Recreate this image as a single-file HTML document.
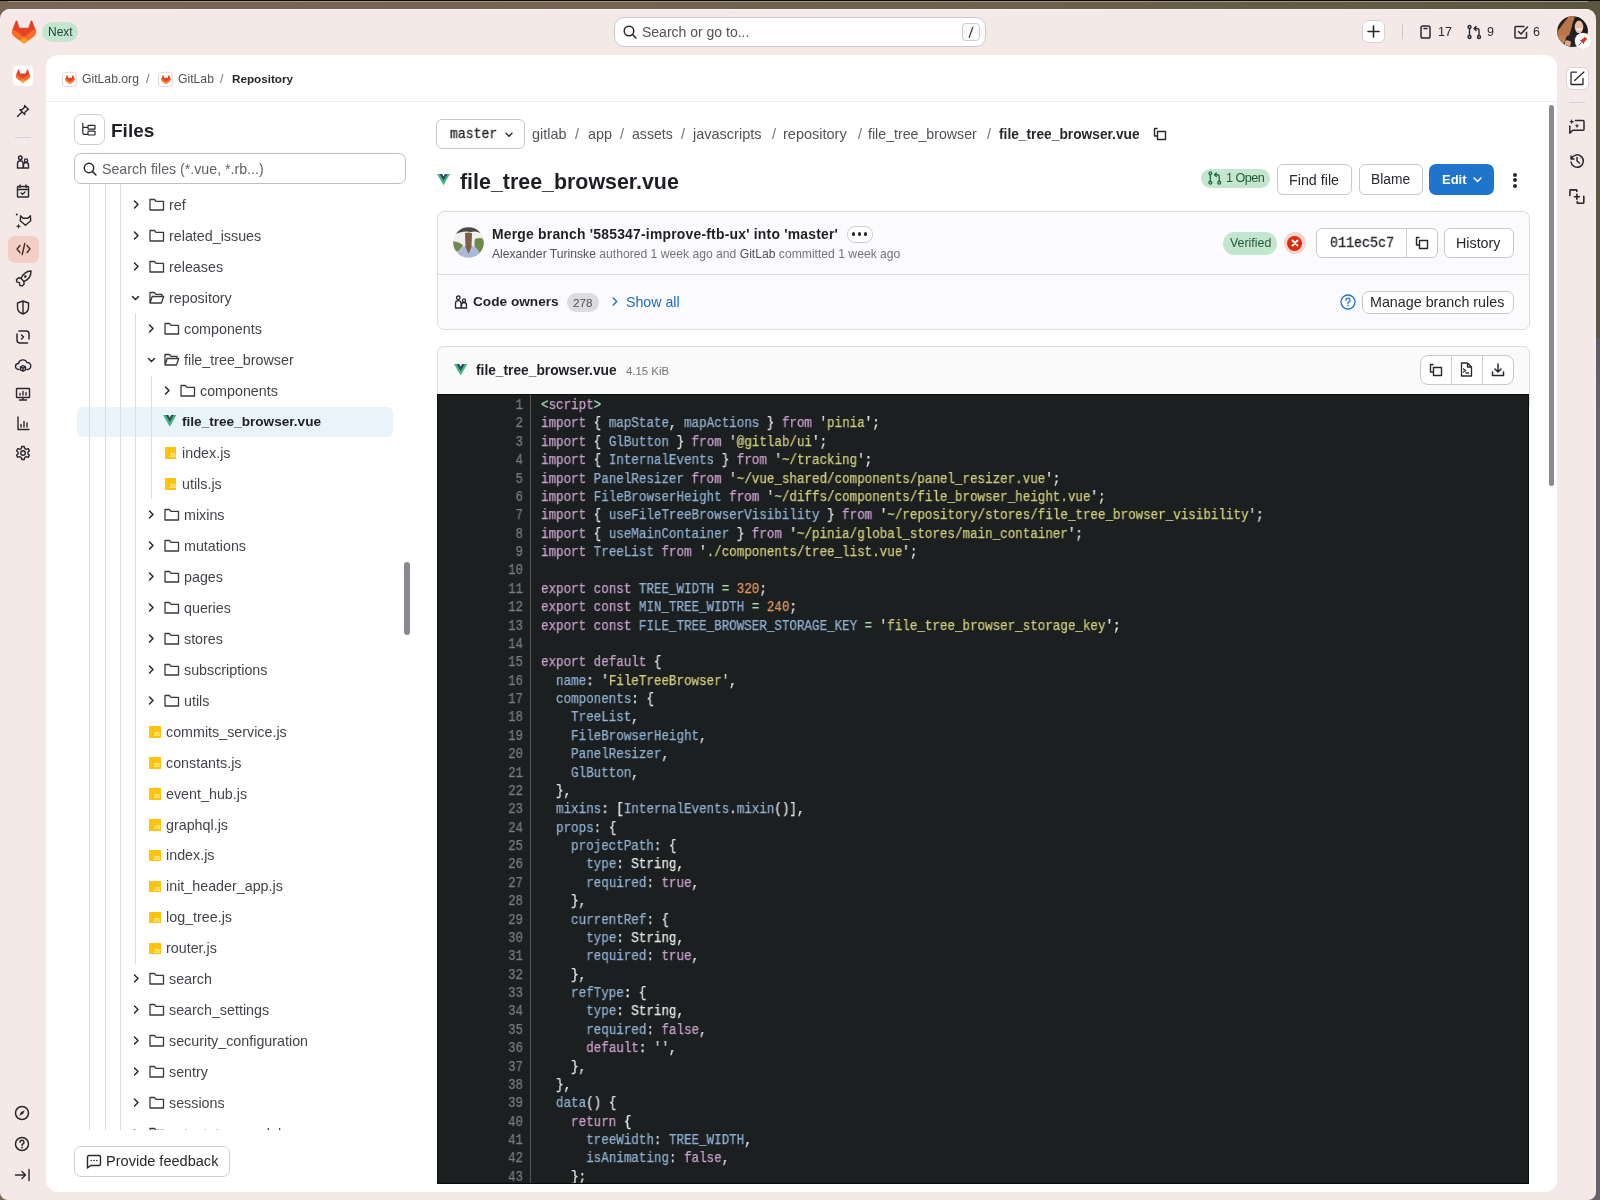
<!DOCTYPE html>
<html><head><meta charset="utf-8">
<style>
*{box-sizing:border-box;margin:0;padding:0}
html,body{width:1600px;height:1200px;overflow:hidden}
body{position:relative;background:linear-gradient(90deg,#7a6654 0%,#6e624c 60%,#5b5641 100%);font-family:"Liberation Sans",sans-serif;color:#28272d}
#topline{position:absolute;left:0;top:0;width:1600px;height:1px;background:#0a0a0a}
#win{position:absolute;left:0;top:8.6px;width:1596px;height:1191.4px;background:#f4e9e7;border-radius:10px 10px 8px 8px;box-shadow:inset 0 1px 0 #fbf5f3}
#panel{position:absolute;left:46px;top:55px;width:1511px;height:1137px;background:#fff;border-radius:12px}
svg{display:block;overflow:visible}
.ic{position:absolute}
.t{position:absolute;white-space:nowrap;line-height:1;will-change:transform}
.s{fill:none;stroke:#28272d;stroke-width:1.4;stroke-linecap:round;stroke-linejoin:round}
.btn{position:absolute;border:1px solid #c9c7cc;border-radius:6px;background:#fff}
.tree .r{position:absolute;height:31px;font-size:14.2px;color:#3a383f;white-space:nowrap;line-height:31px}
.code{position:absolute;left:436.5px;top:393.5px;width:1092.5px;height:790px;background:#1c1f20;border:1px solid #0c0c0c;overflow:hidden}
.ln{position:absolute;left:0;top:1.8px;width:95px;text-align:right;font-family:"Liberation Mono",monospace;font-size:14px;line-height:18.37px;color:#7d7b80;white-space:pre;transform:scaleX(.8958);transform-origin:0 0;-webkit-text-stroke:.25px #7d7b80;will-change:transform}
.gut{position:absolute;left:92.5px;top:0;width:1px;height:800px;background:#55555a}
.cd{position:absolute;left:103.5px;top:1.8px;font-family:"Liberation Mono",monospace;font-size:14px;line-height:18.37px;color:#e0e0e0;white-space:pre;transform:scaleX(.8958);transform-origin:0 0;-webkit-text-stroke:.25px currentColor;will-change:transform}
.k{color:#c9a0cc}.v{color:#8fb0d2}.st{color:#d0cd7c}.n{color:#e4965f}.o{color:#a8d8b0}.p{color:#e6e6e6}
</style></head><body>
<div id="topline"></div>
<div style="position:absolute;left:8px;top:1px;width:1580px;height:1px;background:#a59685"></div>
<div style="position:absolute;left:1590px;top:338px;width:10px;height:862px;background:linear-gradient(180deg,#5f5b66 0%,#6a646c 10%,#67616a 100%)"></div>
<div id="win"></div>
<div id="panel"></div>
<div id="hl" style="position:absolute;left:1595px;top:20px;width:1px;height:1172px;background:#fbf3f1"></div>
<!-- TOP BAR -->
<svg class="ic" style="left:12px;top:20px" width="24" height="24" viewBox="0 0 25 24"><path fill="#E24329" d="m24.507 9.5-.034-.09L21.082.562a.896.896 0 0 0-1.694.091l-2.29 7.01H7.825L5.535.653a.898.898 0 0 0-1.694-.09L.451 9.411.416 9.5a6.297 6.297 0 0 0 2.09 7.278l.012.01.03.022 5.16 3.867 2.56 1.935 1.554 1.176a1.051 1.051 0 0 0 1.268 0l1.555-1.176 2.56-1.935 5.197-3.89.014-.01A6.297 6.297 0 0 0 24.507 9.5Z"/><path fill="#FC6D26" d="m24.507 9.5-.034-.09a11.44 11.44 0 0 0-4.56 2.051l-7.447 5.632 4.742 3.584 5.197-3.89.014-.01A6.297 6.297 0 0 0 24.507 9.5Z"/><path fill="#FCA326" d="m7.707 20.677 2.56 1.935 1.555 1.176a1.051 1.051 0 0 0 1.268 0l1.555-1.176 2.56-1.935-4.743-3.584-4.755 3.584Z"/><path fill="#FC6D26" d="M5.01 11.461a11.43 11.43 0 0 0-4.56-2.05L.416 9.5a6.297 6.297 0 0 0 2.09 7.278l.012.01.03.022 5.16 3.867 4.745-3.584-7.444-5.632Z"/></svg>
<div class="abs" style="position:absolute;left:42px;top:22px;width:36px;height:20px;border-radius:10px;background:#c4e6cf"></div>
<div class="t" style="left:48px;top:26px;font-size:12px;color:#1f3d3a">Next</div>

<div class="abs" style="position:absolute;left:613.7px;top:16.5px;width:372.8px;height:30.5px;border:1px solid #cdcacf;border-radius:10px;background:#fff"></div>
<svg class="ic" style="left:623px;top:25px" width="14" height="14" viewBox="0 0 14 14"><circle class="s" cx="6" cy="6" r="4.8" style="stroke-width:1.5"/><path class="s" d="M9.5 9.5 13 13" style="stroke-width:1.5"/></svg>
<div class="t" style="left:642px;top:25px;font-size:14px;color:#535158">Search or go to...</div>
<div class="abs" style="position:absolute;left:961.5px;top:23.3px;width:18.3px;height:17.3px;border:1px solid #cdcacf;border-radius:4px;background:#fbfbfc"></div>
<svg class="ic" style="left:967px;top:26px" width="8" height="13" viewBox="0 0 8 13"><path d="M2.2 11.3 5.8 1.3" stroke="#3a383f" stroke-width="1.2" stroke-linecap="round"/></svg>

<div class="abs" style="position:absolute;left:1362px;top:20px;width:23px;height:23px;border:1px solid #d6d2d4;border-radius:6px;background:#fff"></div>
<svg class="ic" style="left:1367px;top:25px" width="13" height="13" viewBox="0 0 13 13"><path class="s" d="M6.5 1v11M1 6.5h11" style="stroke-width:1.6"/></svg>
<div class="abs" style="position:absolute;left:1402px;top:24px;width:1px;height:15px;background:#cdc6c6"></div>
<svg class="ic" style="left:1420px;top:25px" width="11" height="14" viewBox="0 0 11 14"><rect class="s" x="1" y="1" width="9" height="12" rx="1.8" style="stroke-width:1.5"/><path class="s" d="M4 3.5h3" style="stroke-width:1.5"/></svg>
<div class="t" style="left:1438px;top:26px;font-size:12.5px;color:#28272d">17</div>
<svg class="ic" style="left:1467px;top:25px" width="15" height="14" viewBox="0 0 15 14"><circle class="s" cx="2.5" cy="2" r="1.5" style="stroke-width:1.4"/><circle class="s" cx="2.5" cy="12" r="1.5" style="stroke-width:1.4"/><circle class="s" cx="12" cy="12" r="1.5" style="stroke-width:1.4"/><path class="s" d="M2.5 3.5v7M12 10.5V5.5q0-2-2-2H7.5M9 1.5l-2 2 2 2" style="stroke-width:1.4"/></svg>
<div class="t" style="left:1487px;top:26px;font-size:12.5px;color:#28272d">9</div>
<svg class="ic" style="left:1514px;top:25px" width="15" height="14" viewBox="0 0 15 14"><path class="s" d="M12.5 7.5V12a1 1 0 0 1-1 1H2a1 1 0 0 1-1-1V2.5a1 1 0 0 1 1-1h8" style="stroke-width:1.5"/><path class="s" d="M4.5 6.5 7 9l6.5-7" style="stroke-width:1.5"/></svg>
<div class="t" style="left:1533px;top:26px;font-size:12.5px;color:#28272d">6</div>

<svg class="ic" style="left:1557px;top:16px" width="31" height="31" viewBox="0 0 31 31">
<defs><clipPath id="av"><circle cx="15.5" cy="15.5" r="15.3"/></clipPath></defs>
<g clip-path="url(#av)">
<rect width="31" height="31" fill="#2a2320"/>
<path d="M12 0 L18 0 L12 20 L0 24 L0 16 Z" fill="#b8754a"/>
<path d="M0 20 L10 19 L6 31 L0 31Z" fill="#c0804f"/>
<ellipse cx="23" cy="12" rx="8" ry="12" fill="#1e1a1c"/>
<ellipse cx="22" cy="11" rx="4.3" ry="6.5" fill="#e8c0a8"/>
<path d="M19.5 12.5 Q22 15 24.5 12.5" stroke="#fff" stroke-width="1.2" fill="none"/>
<path d="M10 20 L22 17 L26 31 L8 31Z" fill="#25232a"/>
<path d="M8 25 Q11 23 14 26 L13 31 L8 31Z" fill="#d9a98a"/>
</g></svg>
<div class="abs" style="position:absolute;left:1575px;top:33px;width:15.5px;height:15.5px;border-radius:50%;background:#fff;box-shadow:0 0 1px #bbb"></div>
<svg class="ic" style="left:1577px;top:35px" width="12" height="12" viewBox="0 0 12 12"><path d="M1.5 10.5 5 7" stroke="#8a8a8a" stroke-width="1"/><path d="M7.5 1.5 10.5 4.5 9.2 5 7 7.6 7.3 9.4 2.6 4.7 4.4 5 7 2.8z" fill="#e0301e"/></svg>

<!-- LEFT SIDEBAR -->
<div class="abs" style="position:absolute;left:13px;top:66px;width:20px;height:20px;background:#fff;border-radius:4px"></div>
<svg class="ic" style="left:16px;top:69px" width="14" height="14" viewBox="0 0 25 24"><path fill="#E24329" d="m24.507 9.5-.034-.09L21.082.562a.896.896 0 0 0-1.694.091l-2.29 7.01H7.825L5.535.653a.898.898 0 0 0-1.694-.09L.451 9.411.416 9.5a6.297 6.297 0 0 0 2.09 7.278l.012.01.03.022 5.16 3.867 2.56 1.935 1.554 1.176a1.051 1.051 0 0 0 1.268 0l1.555-1.176 2.56-1.935 5.197-3.89.014-.01A6.297 6.297 0 0 0 24.507 9.5Z"/><path fill="#FC6D26" d="m24.507 9.5-.034-.09a11.44 11.44 0 0 0-4.56 2.051l-7.447 5.632 4.742 3.584 5.197-3.89.014-.01A6.297 6.297 0 0 0 24.507 9.5Z"/><path fill="#FCA326" d="m7.707 20.677 2.56 1.935 1.555 1.176a1.051 1.051 0 0 0 1.268 0l1.555-1.176 2.56-1.935-4.743-3.584-4.755 3.584Z"/><path fill="#FC6D26" d="M5.01 11.461a11.43 11.43 0 0 0-4.56-2.05L.416 9.5a6.297 6.297 0 0 0 2.09 7.278l.012.01.03.022 5.16 3.867 4.745-3.584-7.444-5.632Z"/></svg>
<svg class="ic" style="left:16px;top:104px" width="14" height="14" viewBox="0 0 14 14"><path class="s" d="M8.5 1.5l4 4-1.2.4-2.3 2.3-.3 2.3-4.7-4.7 2.3-.3 2.3-2.3zM5.5 8.5 1.5 12.5"/></svg>
<div class="abs" style="position:absolute;left:15px;top:136.5px;width:16px;height:1.2px;background:#d3d2d8"></div>
<svg class="ic" style="left:16px;top:155px" width="14" height="14" viewBox="0 0 14 14"><circle class="s" cx="4.3" cy="2.8" r="1.8"/><path class="s" d="M1.5 13V8.5a2.8 2.8 0 0 1 5.6 0V13zM7.5 13v-3a2.5 2.5 0 0 1 5 0v3z"/><circle class="s" cx="10" cy="5.5" r="1.6"/></svg>
<svg class="ic" style="left:16px;top:184px" width="14" height="14" viewBox="0 0 14 14"><rect class="s" x="1.5" y="2.5" width="11" height="10.5" rx=".5"/><path class="s" d="M1.5 5.5h11M4 1v2.5M10 1v2.5M5 9l1.5 1.3L9 8"/></svg>
<svg class="ic" style="left:15px;top:212px" width="18" height="18" viewBox="0 0 18 18"><path class="s" d="M5.6 3.8 8 6.2h5L15.4 3.8l.3 5L10.5 13.2 5.3 8.8z" style="stroke-width:1.4"/><circle cx="1.8" cy="2.6" r="1" fill="#28272d"/><path d="M3.5 11.6l.7 1.9 1.9.8-1.9.8-.7 1.9-.7-1.9-1.9-.8 1.9-.8z" fill="#28272d"/></svg>
<div class="abs" style="position:absolute;left:8px;top:236px;width:31px;height:27px;border-radius:7px;background:#f4cec5"></div>
<svg class="ic" style="left:16px;top:242px" width="15" height="14" viewBox="0 0 15 14"><path class="s" d="M4 3.5 1 7l3 3.5M11 3.5 14 7l-3 3.5M8.8 1.5 6.2 12.5" style="stroke:#4a2a22"/></svg>
<svg class="ic" style="left:15px;top:270px" width="17" height="17" viewBox="0 0 17 17"><path class="s" d="M16 1c-4.5.2-8 2.8-10 7.5l3 3C13.7 9.5 16.2 6 16 1z" style="stroke-width:1.4"/><circle cx="10.3" cy="6.6" r="1.3" fill="#28272d"/><path class="s" d="M6 8.3 3.4 7.8 1.4 9.8l.6 2.3 2.3.3M8.7 11.4l.5 2.6-2 1.9-2.3-.4-.4-2.2" style="stroke-width:1.4"/></svg>
<svg class="ic" style="left:16px;top:300px" width="14" height="15" viewBox="0 0 14 15"><path class="s" d="M7 1 1.5 3v4.5c0 3 2.5 5.5 5.5 6.5 3-1 5.5-3.5 5.5-6.5V3zM7 1v13"/></svg>
<svg class="ic" style="left:16px;top:329px" width="15" height="15" viewBox="0 0 15 15"><path class="s" d="M3 2h7a3 3 0 0 1 3 3v5M1 5v6a3 3 0 0 0 3 3h7.5M5.5 6l2 2-2 2" style="stroke-width:1.5"/></svg>
<svg class="ic" style="left:15px;top:358px" width="16" height="15" viewBox="0 0 16 15"><path class="s" d="M4 11.5H3.5a3 3 0 0 1 0-6A4.5 4.5 0 0 1 12 4.5a3.5 3.5 0 0 1 .5 7H12"/><path class="s" d="M8 7.5l2.5 1.3v3L8 13.2 5.5 11.8v-3zM5.5 8.8 8 10.1l2.5-1.3M8 10.1v3"/></svg>
<svg class="ic" style="left:15px;top:387px" width="16" height="14" viewBox="0 0 16 14"><rect class="s" x="1.5" y="1.5" width="13" height="9" rx=".5"/><path class="s" d="M4.5 13h7M8 10.5V13M5 8V6.5M8 8V4.5M11 8V5.5"/></svg>
<svg class="ic" style="left:16px;top:416px" width="14" height="14" viewBox="0 0 14 14"><path class="s" d="M2 1v12.5h11M5 11V8.5M8 11V5.5M11 11V7"/></svg>
<svg class="ic" style="left:15px;top:445px" width="16" height="16" viewBox="0 0 16 16"><circle class="s" cx="8" cy="8" r="2.3"/><path class="s" d="M6.8 1.5h2.4l.5 2 1.5.8 2-.6 1.2 2.1-1.5 1.4v1.6l1.5 1.4-1.2 2.1-2-.6-1.5.8-.5 2H6.8l-.5-2-1.5-.8-2 .6-1.2-2.1 1.5-1.4V7.2L1.6 5.8l1.2-2.1 2 .6 1.5-.8z"/></svg>
<svg class="ic" style="left:14px;top:1105px" width="16" height="16" viewBox="0 0 16 16"><circle class="s" cx="8" cy="8" r="6.5" style="stroke-width:1.5"/><path d="M10.8 5.2 9 9 5.2 10.8 7 7z" fill="#28272d"/></svg>
<svg class="ic" style="left:14px;top:1135.8px" width="16" height="16" viewBox="0 0 16 16"><circle class="s" cx="8" cy="8" r="6.5" style="stroke-width:1.5"/><path class="s" d="M6 6.2a2 2 0 1 1 2.8 1.8c-.6.3-.8.7-.8 1.3v.3" style="stroke-width:1.5"/><circle cx="8" cy="11.6" r=".9" fill="#28272d"/></svg>
<svg class="ic" style="left:13.5px;top:1168px" width="17" height="14" viewBox="0 0 17 14"><path class="s" d="M1.5 7h10M8 3.5 11.5 7 8 10.5M15 1.5v11" style="stroke-width:1.4"/></svg>

<!-- RIGHT SIDEBAR -->
<div class="abs" style="position:absolute;left:1566px;top:67px;width:23px;height:23px;border:1px solid #d6d2d4;border-radius:6px;background:#fff"></div>
<svg class="ic" style="left:1570px;top:71px" width="15" height="15" viewBox="0 0 15 15"><path class="s" d="M6.3 1.2H1.6a.6.6 0 0 0-.6.6v11.1a.6.6 0 0 0 .6.6h10.8a.6.6 0 0 0 .6-.6V7.3M4.6 9.4 13.9.9" style="stroke-width:1.3"/></svg>
<div class="abs" style="position:absolute;left:1569px;top:101.7px;width:16px;height:1.2px;background:#d3d2d8"></div>
<svg class="ic" style="left:1569px;top:119px" width="16" height="16" viewBox="0 0 16 16"><path class="s" d="M.8 7v7.3l3-3H14a1 1 0 0 0 1-1V2.5a1 1 0 0 0-1-1H6.5" style="stroke-width:1.5"/><path d="M2.7 0.10000000000000009L3.4280000000000004 1.972L5.300000000000001 2.7L3.4280000000000004 3.4280000000000004L2.7 5.300000000000001L1.972 3.4280000000000004L0.10000000000000009 2.7L1.972 1.972Z M8 4.4L8.672 6.128L10.4 6.8L8.672 7.4719999999999995L8 9.2L7.328 7.4719999999999995L5.6 6.8L7.328 6.128Z" fill="#28272d"/></svg>
<svg class="ic" style="left:1569px;top:153px" width="16" height="16" viewBox="0 0 16 16"><path class="s" d="M2 3v3h3M2.3 6A6.2 6.2 0 1 1 2 9M8 4.5V8l2.5 2" style="stroke-width:1.5"/></svg>
<svg class="ic" style="left:1569px;top:189px" width="16" height="16" viewBox="0 0 16 16"><path class="s" d="M.9 6.5V1.5a.6.6 0 0 1 .6-.6h6.3v1.6M14.8 7.3v6.3a.6.6 0 0 1-.6.6H8.3v-1.6M7.9 5.2v5M5.4 7.7h5" style="stroke-width:1.6"/></svg>
<!-- BREADCRUMB -->
<div class="abs" style="position:absolute;left:46px;top:101px;width:1511px;height:1px;background:#f3ebe9"></div>
<div class="abs" style="position:absolute;left:62px;top:72px;width:15px;height:15px;border:1px solid #dcdcde;border-radius:4px;background:#fff"></div>
<svg class="ic" style="left:65px;top:75px" width="10" height="9" viewBox="0 0 25 24"><path fill="#E24329" d="m24.507 9.5-.034-.09L21.082.562a.896.896 0 0 0-1.694.091l-2.29 7.01H7.825L5.535.653a.898.898 0 0 0-1.694-.09L.451 9.411.416 9.5a6.297 6.297 0 0 0 2.09 7.278l.012.01.03.022 5.16 3.867 2.56 1.935 1.554 1.176a1.051 1.051 0 0 0 1.268 0l1.555-1.176 2.56-1.935 5.197-3.89.014-.01A6.297 6.297 0 0 0 24.507 9.5Z"/><path fill="#FC6D26" d="m24.507 9.5-.034-.09a11.44 11.44 0 0 0-4.56 2.051l-7.447 5.632 4.742 3.584 5.197-3.89.014-.01A6.297 6.297 0 0 0 24.507 9.5Z"/><path fill="#FCA326" d="m7.707 20.677 2.56 1.935 1.555 1.176a1.051 1.051 0 0 0 1.268 0l1.555-1.176 2.56-1.935-4.743-3.584-4.755 3.584Z"/><path fill="#FC6D26" d="M5.01 11.461a11.43 11.43 0 0 0-4.56-2.05L.416 9.5a6.297 6.297 0 0 0 2.09 7.278l.012.01.03.022 5.16 3.867 4.745-3.584-7.444-5.632Z"/></svg>
<div class="t" style="left:81.5px;top:73px;font-size:12.2px;color:#535158">GitLab.org</div>
<div class="t" style="left:146px;top:73px;font-size:12.5px;color:#737278">/</div>
<div class="abs" style="position:absolute;left:158px;top:72px;width:15px;height:15px;border:1px solid #dcdcde;border-radius:4px;background:#fff"></div>
<svg class="ic" style="left:161px;top:75px" width="10" height="9" viewBox="0 0 25 24"><path fill="#E24329" d="m24.507 9.5-.034-.09L21.082.562a.896.896 0 0 0-1.694.091l-2.29 7.01H7.825L5.535.653a.898.898 0 0 0-1.694-.09L.451 9.411.416 9.5a6.297 6.297 0 0 0 2.09 7.278l.012.01.03.022 5.16 3.867 2.56 1.935 1.554 1.176a1.051 1.051 0 0 0 1.268 0l1.555-1.176 2.56-1.935 5.197-3.89.014-.01A6.297 6.297 0 0 0 24.507 9.5Z"/><path fill="#FC6D26" d="m24.507 9.5-.034-.09a11.44 11.44 0 0 0-4.56 2.051l-7.447 5.632 4.742 3.584 5.197-3.89.014-.01A6.297 6.297 0 0 0 24.507 9.5Z"/><path fill="#FCA326" d="m7.707 20.677 2.56 1.935 1.555 1.176a1.051 1.051 0 0 0 1.268 0l1.555-1.176 2.56-1.935-4.743-3.584-4.755 3.584Z"/><path fill="#FC6D26" d="M5.01 11.461a11.43 11.43 0 0 0-4.56-2.05L.416 9.5a6.297 6.297 0 0 0 2.09 7.278l.012.01.03.022 5.16 3.867 4.745-3.584-7.444-5.632Z"/></svg>
<div class="t" style="left:177.5px;top:73px;font-size:12.2px;color:#535158">GitLab</div>
<div class="t" style="left:219.5px;top:73px;font-size:12.5px;color:#737278">/</div>
<div class="t" style="left:232px;top:73px;font-size:11.7px;font-weight:bold;color:#28272d">Repository</div>

<!-- FILES HEADER -->
<div class="abs" style="position:absolute;left:73.5px;top:114px;width:31px;height:31px;border:1px solid #cfcdd2;border-radius:7px;background:#fff"></div>
<svg class="ic" style="left:82px;top:123px" width="14" height="14" viewBox="0 0 14 14"><path class="s" d="M.8.3v9.4q0 1.6 1.6 1.6h3.1M.8 4.3h4.7" style="stroke-width:1.2"/><rect class="s" x="6" y="2.3" width="7" height="3.8" rx=".4" style="stroke-width:1.2"/><rect class="s" x="6" y="8.2" width="7" height="3.8" rx=".4" style="stroke-width:1.2"/></svg>
<div class="t" style="left:110.5px;top:121px;font-size:19px;font-weight:bold;color:#1f1e24">Files</div>
<div class="abs" style="position:absolute;left:73.5px;top:153px;width:332px;height:31px;border:1px solid #bfbfc3;border-radius:7px;background:#fff"></div>
<svg class="ic" style="left:83px;top:162px" width="14" height="14" viewBox="0 0 14 14"><circle class="s" cx="6" cy="6" r="4.7" style="stroke-width:1.5"/><path class="s" d="M9.4 9.4 13 13" style="stroke-width:1.5"/></svg>
<div class="t" style="left:102px;top:161.5px;font-size:14.2px;color:#626168">Search files (*.vue, *.rb...)</div>
<div class="abs" style="position:absolute;left:404px;top:562px;width:6px;height:73px;border-radius:3px;background:#8b8a90"></div>

<!-- FEEDBACK -->
<div class="abs" style="position:absolute;left:74px;top:1146px;width:156px;height:31px;border:1px solid #cfcdd2;border-radius:7px;background:#fff"></div>
<svg class="ic" style="left:86px;top:1154px" width="16" height="15" viewBox="0 0 16 15"><path class="s" d="M1.5 14V3a1.5 1.5 0 0 1 1.5-1.5h10A1.5 1.5 0 0 1 14.5 3v7A1.5 1.5 0 0 1 13 11.5H4.5z" style="stroke-width:1.4"/><circle cx="5.2" cy="6.5" r=".8" fill="#28272d"/><circle cx="8" cy="6.5" r=".8" fill="#28272d"/><circle cx="10.8" cy="6.5" r=".8" fill="#28272d"/></svg>
<div class="t" style="left:106px;top:1154px;font-size:14.55px;color:#28272d">Provide feedback</div>
<div style="position:absolute;left:0;top:0;width:430px;height:1129.5px;overflow:hidden">
<div class="abs" style="position:absolute;left:77px;top:407px;width:316px;height:30px;border-radius:6px;background:#e9f3fc"></div>
<div class="abs" style="position:absolute;left:89px;top:184px;width:1px;height:946px;background:#dcdcde"></div>
<div class="abs" style="position:absolute;left:105px;top:184px;width:1px;height:946px;background:#dcdcde"></div>
<div class="abs" style="position:absolute;left:120px;top:184px;width:1px;height:946px;background:#dcdcde"></div>
<div class="abs" style="position:absolute;left:135px;top:313px;width:1px;height:651px;background:#dcdcde"></div>
<div class="abs" style="position:absolute;left:151px;top:376px;width:1px;height:123px;background:#dcdcde"></div>
<svg class="ic" style="left:132.5px;top:200.1px" width="6" height="9" viewBox="0 0 6 9"><path class="s" style="stroke-width:1.5" d="M1.5 1 5 4.5 1.5 8"/></svg>
<svg class="ic" style="left:148.5px;top:198.1px" width="16" height="13" viewBox="0 0 16 13"><path class="s" style="stroke:#3a383f;stroke-width:1.3" d="M1 1.5h4.5l1.5 1.8h7.5v8.7H1z"/></svg>
<div class="t" style="left:168.5px;top:198.1px;font-size:14.3px;font-weight:normal;color:#45434a">ref</div>
<svg class="ic" style="left:132.5px;top:231.07px" width="6" height="9" viewBox="0 0 6 9"><path class="s" style="stroke-width:1.5" d="M1.5 1 5 4.5 1.5 8"/></svg>
<svg class="ic" style="left:148.5px;top:229.07px" width="16" height="13" viewBox="0 0 16 13"><path class="s" style="stroke:#3a383f;stroke-width:1.3" d="M1 1.5h4.5l1.5 1.8h7.5v8.7H1z"/></svg>
<div class="t" style="left:168.5px;top:229.07px;font-size:14.3px;font-weight:normal;color:#45434a">related_issues</div>
<svg class="ic" style="left:132.5px;top:262.04px" width="6" height="9" viewBox="0 0 6 9"><path class="s" style="stroke-width:1.5" d="M1.5 1 5 4.5 1.5 8"/></svg>
<svg class="ic" style="left:148.5px;top:260.04px" width="16" height="13" viewBox="0 0 16 13"><path class="s" style="stroke:#3a383f;stroke-width:1.3" d="M1 1.5h4.5l1.5 1.8h7.5v8.7H1z"/></svg>
<div class="t" style="left:168.5px;top:260.04px;font-size:14.3px;font-weight:normal;color:#45434a">releases</div>
<svg class="ic" style="left:131.0px;top:294.81px" width="9" height="6" viewBox="0 0 9 6"><path class="s" style="stroke-width:1.5" d="M1.5 1.5 4.5 4.5 7.5 1.5"/></svg>
<svg class="ic" style="left:148.5px;top:291.01px" width="16" height="13" viewBox="0 0 16 13"><path class="s" style="stroke:#3a383f;stroke-width:1.3" d="M1 12V1.5h4.5l1.5 1.8h6v2.2M1 12l2.2-6.5h11.5L12.5 12z"/></svg>
<div class="t" style="left:168.5px;top:291.01px;font-size:14.3px;font-weight:normal;color:#45434a">repository</div>
<svg class="ic" style="left:148.3px;top:323.97999999999996px" width="6" height="9" viewBox="0 0 6 9"><path class="s" style="stroke-width:1.5" d="M1.5 1 5 4.5 1.5 8"/></svg>
<svg class="ic" style="left:164.3px;top:321.97999999999996px" width="16" height="13" viewBox="0 0 16 13"><path class="s" style="stroke:#3a383f;stroke-width:1.3" d="M1 1.5h4.5l1.5 1.8h7.5v8.7H1z"/></svg>
<div class="t" style="left:184.3px;top:321.97999999999996px;font-size:14.3px;font-weight:normal;color:#45434a">components</div>
<svg class="ic" style="left:146.8px;top:356.75px" width="9" height="6" viewBox="0 0 9 6"><path class="s" style="stroke-width:1.5" d="M1.5 1.5 4.5 4.5 7.5 1.5"/></svg>
<svg class="ic" style="left:164.3px;top:352.95px" width="16" height="13" viewBox="0 0 16 13"><path class="s" style="stroke:#3a383f;stroke-width:1.3" d="M1 12V1.5h4.5l1.5 1.8h6v2.2M1 12l2.2-6.5h11.5L12.5 12z"/></svg>
<div class="t" style="left:184.3px;top:352.95px;font-size:14.3px;font-weight:normal;color:#45434a">file_tree_browser</div>
<svg class="ic" style="left:164.1px;top:385.92px" width="6" height="9" viewBox="0 0 6 9"><path class="s" style="stroke-width:1.5" d="M1.5 1 5 4.5 1.5 8"/></svg>
<svg class="ic" style="left:180.1px;top:383.92px" width="16" height="13" viewBox="0 0 16 13"><path class="s" style="stroke:#3a383f;stroke-width:1.3" d="M1 1.5h4.5l1.5 1.8h7.5v8.7H1z"/></svg>
<div class="t" style="left:200.1px;top:383.92px;font-size:14.3px;font-weight:normal;color:#45434a">components</div>
<svg class="ic" style="left:163.29999999999998px;top:415.39px" width="13.5" height="11.7" viewBox="0 0 261.76 226.69"><path d="M161.096.001l-30.225 52.351L100.647.001H-.005l130.877 226.688L261.749.001z" fill="#41b883"/><path d="M161.096.001l-30.225 52.351L100.647.001H52.346l78.526 136.01L209.398.001z" fill="#34495e"/></svg>
<div class="t" style="left:182.1px;top:414.89px;font-size:13.6px;font-weight:bold;color:#1f1e24">file_tree_browser.vue</div>
<div class="abs" style="position:absolute;left:164.79999999999998px;top:447.35999999999996px;width:11.5px;height:11.5px;background:#fdc30f"></div>
<div class="t" style="left:169.2px;top:453.46px;font-size:5.5px;color:#fff3c9;font-weight:bold;will-change:auto">JS</div>
<div class="t" style="left:182.1px;top:445.85999999999996px;font-size:14.3px;font-weight:normal;color:#45434a">index.js</div>
<div class="abs" style="position:absolute;left:164.79999999999998px;top:478.33px;width:11.5px;height:11.5px;background:#fdc30f"></div>
<div class="t" style="left:169.2px;top:484.43px;font-size:5.5px;color:#fff3c9;font-weight:bold;will-change:auto">JS</div>
<div class="t" style="left:182.1px;top:476.83px;font-size:14.3px;font-weight:normal;color:#45434a">utils.js</div>
<svg class="ic" style="left:148.3px;top:509.8px" width="6" height="9" viewBox="0 0 6 9"><path class="s" style="stroke-width:1.5" d="M1.5 1 5 4.5 1.5 8"/></svg>
<svg class="ic" style="left:164.3px;top:507.8px" width="16" height="13" viewBox="0 0 16 13"><path class="s" style="stroke:#3a383f;stroke-width:1.3" d="M1 1.5h4.5l1.5 1.8h7.5v8.7H1z"/></svg>
<div class="t" style="left:184.3px;top:507.8px;font-size:14.3px;font-weight:normal;color:#45434a">mixins</div>
<svg class="ic" style="left:148.3px;top:540.77px" width="6" height="9" viewBox="0 0 6 9"><path class="s" style="stroke-width:1.5" d="M1.5 1 5 4.5 1.5 8"/></svg>
<svg class="ic" style="left:164.3px;top:538.77px" width="16" height="13" viewBox="0 0 16 13"><path class="s" style="stroke:#3a383f;stroke-width:1.3" d="M1 1.5h4.5l1.5 1.8h7.5v8.7H1z"/></svg>
<div class="t" style="left:184.3px;top:538.77px;font-size:14.3px;font-weight:normal;color:#45434a">mutations</div>
<svg class="ic" style="left:148.3px;top:571.74px" width="6" height="9" viewBox="0 0 6 9"><path class="s" style="stroke-width:1.5" d="M1.5 1 5 4.5 1.5 8"/></svg>
<svg class="ic" style="left:164.3px;top:569.74px" width="16" height="13" viewBox="0 0 16 13"><path class="s" style="stroke:#3a383f;stroke-width:1.3" d="M1 1.5h4.5l1.5 1.8h7.5v8.7H1z"/></svg>
<div class="t" style="left:184.3px;top:569.74px;font-size:14.3px;font-weight:normal;color:#45434a">pages</div>
<svg class="ic" style="left:148.3px;top:602.71px" width="6" height="9" viewBox="0 0 6 9"><path class="s" style="stroke-width:1.5" d="M1.5 1 5 4.5 1.5 8"/></svg>
<svg class="ic" style="left:164.3px;top:600.71px" width="16" height="13" viewBox="0 0 16 13"><path class="s" style="stroke:#3a383f;stroke-width:1.3" d="M1 1.5h4.5l1.5 1.8h7.5v8.7H1z"/></svg>
<div class="t" style="left:184.3px;top:600.71px;font-size:14.3px;font-weight:normal;color:#45434a">queries</div>
<svg class="ic" style="left:148.3px;top:633.6800000000001px" width="6" height="9" viewBox="0 0 6 9"><path class="s" style="stroke-width:1.5" d="M1.5 1 5 4.5 1.5 8"/></svg>
<svg class="ic" style="left:164.3px;top:631.6800000000001px" width="16" height="13" viewBox="0 0 16 13"><path class="s" style="stroke:#3a383f;stroke-width:1.3" d="M1 1.5h4.5l1.5 1.8h7.5v8.7H1z"/></svg>
<div class="t" style="left:184.3px;top:631.6800000000001px;font-size:14.3px;font-weight:normal;color:#45434a">stores</div>
<svg class="ic" style="left:148.3px;top:664.65px" width="6" height="9" viewBox="0 0 6 9"><path class="s" style="stroke-width:1.5" d="M1.5 1 5 4.5 1.5 8"/></svg>
<svg class="ic" style="left:164.3px;top:662.65px" width="16" height="13" viewBox="0 0 16 13"><path class="s" style="stroke:#3a383f;stroke-width:1.3" d="M1 1.5h4.5l1.5 1.8h7.5v8.7H1z"/></svg>
<div class="t" style="left:184.3px;top:662.65px;font-size:14.3px;font-weight:normal;color:#45434a">subscriptions</div>
<svg class="ic" style="left:148.3px;top:695.62px" width="6" height="9" viewBox="0 0 6 9"><path class="s" style="stroke-width:1.5" d="M1.5 1 5 4.5 1.5 8"/></svg>
<svg class="ic" style="left:164.3px;top:693.62px" width="16" height="13" viewBox="0 0 16 13"><path class="s" style="stroke:#3a383f;stroke-width:1.3" d="M1 1.5h4.5l1.5 1.8h7.5v8.7H1z"/></svg>
<div class="t" style="left:184.3px;top:693.62px;font-size:14.3px;font-weight:normal;color:#45434a">utils</div>
<div class="abs" style="position:absolute;left:149.0px;top:726.09px;width:11.5px;height:11.5px;background:#fdc30f"></div>
<div class="t" style="left:153.4px;top:732.1899999999999px;font-size:5.5px;color:#fff3c9;font-weight:bold;will-change:auto">JS</div>
<div class="t" style="left:166.3px;top:724.59px;font-size:14.3px;font-weight:normal;color:#45434a">commits_service.js</div>
<div class="abs" style="position:absolute;left:149.0px;top:757.0600000000001px;width:11.5px;height:11.5px;background:#fdc30f"></div>
<div class="t" style="left:153.4px;top:763.16px;font-size:5.5px;color:#fff3c9;font-weight:bold;will-change:auto">JS</div>
<div class="t" style="left:166.3px;top:755.5600000000001px;font-size:14.3px;font-weight:normal;color:#45434a">constants.js</div>
<div class="abs" style="position:absolute;left:149.0px;top:788.03px;width:11.5px;height:11.5px;background:#fdc30f"></div>
<div class="t" style="left:153.4px;top:794.1299999999999px;font-size:5.5px;color:#fff3c9;font-weight:bold;will-change:auto">JS</div>
<div class="t" style="left:166.3px;top:786.53px;font-size:14.3px;font-weight:normal;color:#45434a">event_hub.js</div>
<div class="abs" style="position:absolute;left:149.0px;top:819.0px;width:11.5px;height:11.5px;background:#fdc30f"></div>
<div class="t" style="left:153.4px;top:825.0999999999999px;font-size:5.5px;color:#fff3c9;font-weight:bold;will-change:auto">JS</div>
<div class="t" style="left:166.3px;top:817.5px;font-size:14.3px;font-weight:normal;color:#45434a">graphql.js</div>
<div class="abs" style="position:absolute;left:149.0px;top:849.97px;width:11.5px;height:11.5px;background:#fdc30f"></div>
<div class="t" style="left:153.4px;top:856.0699999999999px;font-size:5.5px;color:#fff3c9;font-weight:bold;will-change:auto">JS</div>
<div class="t" style="left:166.3px;top:848.47px;font-size:14.3px;font-weight:normal;color:#45434a">index.js</div>
<div class="abs" style="position:absolute;left:149.0px;top:880.9399999999999px;width:11.5px;height:11.5px;background:#fdc30f"></div>
<div class="t" style="left:153.4px;top:887.0399999999998px;font-size:5.5px;color:#fff3c9;font-weight:bold;will-change:auto">JS</div>
<div class="t" style="left:166.3px;top:879.4399999999999px;font-size:14.3px;font-weight:normal;color:#45434a">init_header_app.js</div>
<div class="abs" style="position:absolute;left:149.0px;top:911.91px;width:11.5px;height:11.5px;background:#fdc30f"></div>
<div class="t" style="left:153.4px;top:918.0099999999999px;font-size:5.5px;color:#fff3c9;font-weight:bold;will-change:auto">JS</div>
<div class="t" style="left:166.3px;top:910.41px;font-size:14.3px;font-weight:normal;color:#45434a">log_tree.js</div>
<div class="abs" style="position:absolute;left:149.0px;top:942.88px;width:11.5px;height:11.5px;background:#fdc30f"></div>
<div class="t" style="left:153.4px;top:948.9799999999999px;font-size:5.5px;color:#fff3c9;font-weight:bold;will-change:auto">JS</div>
<div class="t" style="left:166.3px;top:941.38px;font-size:14.3px;font-weight:normal;color:#45434a">router.js</div>
<svg class="ic" style="left:132.5px;top:974.35px" width="6" height="9" viewBox="0 0 6 9"><path class="s" style="stroke-width:1.5" d="M1.5 1 5 4.5 1.5 8"/></svg>
<svg class="ic" style="left:148.5px;top:972.35px" width="16" height="13" viewBox="0 0 16 13"><path class="s" style="stroke:#3a383f;stroke-width:1.3" d="M1 1.5h4.5l1.5 1.8h7.5v8.7H1z"/></svg>
<div class="t" style="left:168.5px;top:972.35px;font-size:14.3px;font-weight:normal;color:#45434a">search</div>
<svg class="ic" style="left:132.5px;top:1005.32px" width="6" height="9" viewBox="0 0 6 9"><path class="s" style="stroke-width:1.5" d="M1.5 1 5 4.5 1.5 8"/></svg>
<svg class="ic" style="left:148.5px;top:1003.32px" width="16" height="13" viewBox="0 0 16 13"><path class="s" style="stroke:#3a383f;stroke-width:1.3" d="M1 1.5h4.5l1.5 1.8h7.5v8.7H1z"/></svg>
<div class="t" style="left:168.5px;top:1003.32px;font-size:14.3px;font-weight:normal;color:#45434a">search_settings</div>
<svg class="ic" style="left:132.5px;top:1036.29px" width="6" height="9" viewBox="0 0 6 9"><path class="s" style="stroke-width:1.5" d="M1.5 1 5 4.5 1.5 8"/></svg>
<svg class="ic" style="left:148.5px;top:1034.29px" width="16" height="13" viewBox="0 0 16 13"><path class="s" style="stroke:#3a383f;stroke-width:1.3" d="M1 1.5h4.5l1.5 1.8h7.5v8.7H1z"/></svg>
<div class="t" style="left:168.5px;top:1034.29px;font-size:14.3px;font-weight:normal;color:#45434a">security_configuration</div>
<svg class="ic" style="left:132.5px;top:1067.26px" width="6" height="9" viewBox="0 0 6 9"><path class="s" style="stroke-width:1.5" d="M1.5 1 5 4.5 1.5 8"/></svg>
<svg class="ic" style="left:148.5px;top:1065.26px" width="16" height="13" viewBox="0 0 16 13"><path class="s" style="stroke:#3a383f;stroke-width:1.3" d="M1 1.5h4.5l1.5 1.8h7.5v8.7H1z"/></svg>
<div class="t" style="left:168.5px;top:1065.26px;font-size:14.3px;font-weight:normal;color:#45434a">sentry</div>
<svg class="ic" style="left:132.5px;top:1098.23px" width="6" height="9" viewBox="0 0 6 9"><path class="s" style="stroke-width:1.5" d="M1.5 1 5 4.5 1.5 8"/></svg>
<svg class="ic" style="left:148.5px;top:1096.23px" width="16" height="13" viewBox="0 0 16 13"><path class="s" style="stroke:#3a383f;stroke-width:1.3" d="M1 1.5h4.5l1.5 1.8h7.5v8.7H1z"/></svg>
<div class="t" style="left:168.5px;top:1096.23px;font-size:14.3px;font-weight:normal;color:#45434a">sessions</div>
<svg class="ic" style="left:132.5px;top:1129.2px" width="6" height="9" viewBox="0 0 6 9"><path class="s" style="stroke-width:1.5" d="M1.5 1 5 4.5 1.5 8"/></svg>
<svg class="ic" style="left:148.5px;top:1127.2px" width="16" height="13" viewBox="0 0 16 13"><path class="s" style="stroke:#3a383f;stroke-width:1.3" d="M1 1.5h4.5l1.5 1.8h7.5v8.7H1z"/></svg>
<div class="t" style="left:168.5px;top:1127.2px;font-size:14.3px;font-weight:normal;color:#45434a">set_status_modal</div>
</div><!-- BRANCH + PATH -->
<div class="btn" style="left:436px;top:118.5px;width:89px;height:30px"></div>
<div class="t" style="left:449.5px;top:126.8px;font-family:'Liberation Mono',monospace;font-size:14.2px;color:#28272d;-webkit-text-stroke:.3px #28272d;transform:scaleX(.925);transform-origin:0 0">master</div>
<svg class="ic" style="left:505px;top:132px" width="8" height="6" viewBox="0 0 8 6"><path class="s" d="M1 1.2 4 4.2 7 1.2" style="stroke-width:1.4"/></svg>
<div class="t" style="left:532px;top:127.3px;font-size:14.4px;color:#535158">gitlab</div>
<div class="t" style="left:575px;top:127.3px;font-size:14.4px;color:#737278">/</div>
<div class="t" style="left:588px;top:127.3px;font-size:14.4px;color:#535158">app</div>
<div class="t" style="left:619.5px;top:127.3px;font-size:14.4px;color:#737278">/</div>
<div class="t" style="left:632.3px;top:127.3px;font-size:14.1px;color:#535158">assets</div>
<div class="t" style="left:681px;top:127.3px;font-size:14.4px;color:#737278">/</div>
<div class="t" style="left:693px;top:127.3px;font-size:14.5px;color:#535158">javascripts</div>
<div class="t" style="left:772px;top:127.3px;font-size:14.4px;color:#737278">/</div>
<div class="t" style="left:783px;top:127.3px;font-size:14.5px;color:#535158">repository</div>
<div class="t" style="left:857.5px;top:127.3px;font-size:14.4px;color:#737278">/</div>
<div class="t" style="left:868.4px;top:127.3px;font-size:14.2px;color:#535158">file_tree_browser</div>
<div class="t" style="left:986.5px;top:127.3px;font-size:14.4px;color:#737278">/</div>
<div class="t" style="left:998.7px;top:127.8px;font-size:13.75px;font-weight:bold;color:#28272d">file_tree_browser.vue</div>
<svg class="ic" style="left:1153px;top:127px" width="14" height="14" viewBox="0 0 14 14"><path class="s" d="M4 1.5H1.5V9H4M4.5 4.5h8v8h-8z" style="stroke-width:1.4"/></svg>

<!-- TITLE -->
<svg class="ic" style="left:437.3px;top:174px" width="13" height="11.3" viewBox="0 0 261.76 226.69"><path d="M161.096.001l-30.225 52.351L100.647.001H-.005l130.877 226.688L261.749.001z" fill="#41b883"/><path d="M161.096.001l-30.225 52.351L100.647.001H52.346l78.526 136.01L209.398.001z" fill="#34495e"/></svg>
<div class="t" style="left:459.5px;top:171.5px;font-size:21.4px;font-weight:bold;color:#1f1e24">file_tree_browser.vue</div>

<div class="abs" style="position:absolute;left:1201px;top:168.5px;width:69px;height:19.5px;border-radius:10px;background:#c4e6cf"></div>
<svg class="ic" style="left:1207.5px;top:171px" width="14" height="14" viewBox="0 0 15 14"><circle class="s" cx="2.5" cy="2" r="1.5" style="stroke:#1f6a3f;stroke-width:1.4"/><circle class="s" cx="2.5" cy="12" r="1.5" style="stroke:#1f6a3f;stroke-width:1.4"/><circle class="s" cx="12" cy="12" r="1.5" style="stroke:#1f6a3f;stroke-width:1.4"/><path class="s" d="M2.5 3.5v7M12 10.5V5.5q0-2-2-2H7.5M9 1.5l-2 2 2 2" style="stroke:#1f6a3f;stroke-width:1.4"/></svg>
<div class="t" style="left:1226px;top:172px;font-size:12.6px;letter-spacing:-.5px;color:#1f5a38">1 Open</div>
<div class="btn" style="left:1276.5px;top:164.3px;width:75.5px;height:30.7px"></div>
<div class="t" style="left:1289px;top:173.3px;font-size:14.3px;color:#28272d">Find file</div>
<div class="btn" style="left:1358.5px;top:164.3px;width:64px;height:30.7px"></div>
<div class="t" style="left:1371px;top:173.3px;font-size:13.8px;color:#28272d">Blame</div>
<div class="abs" style="position:absolute;left:1429px;top:164.3px;width:64.5px;height:30.7px;border-radius:7px;background:#1f75cb"></div>
<div class="t" style="left:1441.5px;top:173.3px;font-size:13px;font-weight:bold;color:#fff">Edit</div>
<svg class="ic" style="left:1472.5px;top:177px" width="9" height="6" viewBox="0 0 9 6"><path class="s" d="M1 1 4.5 4.5 8 1" style="stroke:#fff;stroke-width:1.4"/></svg>
<div class="abs" style="position:absolute;left:1512.7px;top:172.5px;width:4px;height:4px;border-radius:50%;background:#28272d"></div>
<div class="abs" style="position:absolute;left:1512.7px;top:178.2px;width:4px;height:4px;border-radius:50%;background:#28272d"></div>
<div class="abs" style="position:absolute;left:1512.7px;top:183.6px;width:4px;height:4px;border-radius:50%;background:#28272d"></div>

<!-- COMMIT BOX -->
<div class="abs" style="position:absolute;left:436.5px;top:211px;width:1093.5px;height:118.5px;border:1px solid #dcdcde;border-radius:7px;background:#fbfafd"></div>
<div class="abs" style="position:absolute;left:437px;top:274px;width:1092.5px;height:1px;background:#dcdcde"></div>
<svg class="ic" style="left:453px;top:227px" width="31" height="31" viewBox="0 0 31 31">
<defs><clipPath id="av2"><circle cx="15.5" cy="15.5" r="15.3"/></clipPath></defs>
<g clip-path="url(#av2)"><rect width="31" height="31" fill="#eef0f0"/>
<path d="M0 0H31V8Q24 3 18 5 Q10 3 0 8Z" fill="#4a4a45"/>
<path d="M22 12 Q30 9 31 14 V28 L24 26 Q20 18 22 12Z" fill="#6d8a4a"/>
<path d="M0 14 Q6 15 10 18 L8 24 L0 25Z" fill="#6f8a50"/>
<path d="M3 31 Q5 20 12 19 L19 19 Q26 20 28 31Z" fill="#a9b9d6"/>
<path d="M12 6 Q15.5 5 19 6 L18.5 20 L15.5 27 L12.5 20Z" fill="#7e5e48"/>
</g></svg>
<div class="t" style="left:492px;top:227.5px;font-size:13.9px;letter-spacing:.22px;font-weight:bold;color:#1f1e24">Merge branch '585347-improve-ftb-ux' into 'master'</div>
<div class="abs" style="position:absolute;left:847px;top:226px;width:25.5px;height:16.5px;border:1px solid #cfcdd2;border-radius:8px;background:#fff"></div>
<div class="abs" style="position:absolute;left:852.1px;top:232.4px;width:3.2px;height:3.2px;border-radius:50%;background:#28272d"></div>
<div class="abs" style="position:absolute;left:858.2px;top:232.4px;width:3.2px;height:3.2px;border-radius:50%;background:#28272d"></div>
<div class="abs" style="position:absolute;left:864.3px;top:232.4px;width:3.2px;height:3.2px;border-radius:50%;background:#28272d"></div>
<div class="t" style="left:492px;top:247.5px;font-size:12.15px;color:#737278"><span style="color:#535158">Alexander Turinske</span> authored 1 week ago and <span style="color:#535158">GitLab</span> committed 1 week ago</div>

<div class="abs" style="position:absolute;left:1222.5px;top:231.5px;width:54.5px;height:23px;border-radius:11.5px;background:#c4e6cf"></div>
<div class="t" style="left:1229.5px;top:237.3px;font-size:12.4px;color:#1f5a38">Verified</div>
<div class="abs" style="position:absolute;left:1283.5px;top:232px;width:22px;height:22px;border-radius:50%;background:#f6d3cc"></div>
<div class="abs" style="position:absolute;left:1287px;top:235.5px;width:15px;height:15px;border-radius:50%;background:#dd2b0e"></div>
<svg class="ic" style="left:1290.5px;top:239px" width="8" height="8" viewBox="0 0 8 8"><path d="M1.5 1.5l5 5M6.5 1.5l-5 5" stroke="#fff" stroke-width="1.8" stroke-linecap="round"/></svg>
<div class="btn" style="left:1316px;top:227.5px;width:121.5px;height:30.5px"></div>
<div class="abs" style="position:absolute;left:1406px;top:228px;width:1px;height:29.5px;background:#cfcdd2"></div>
<div class="t" style="left:1329.5px;top:236.3px;font-family:'Liberation Mono',monospace;font-size:14.5px;color:#28272d;-webkit-text-stroke:.3px #28272d;transform:scaleX(.92);transform-origin:0 0">011ec5c7</div>
<svg class="ic" style="left:1414.5px;top:236px" width="14" height="14" viewBox="0 0 14 14"><path class="s" d="M4 1.5H1.5V9H4M4.5 4.5h8v8h-8z" style="stroke-width:1.4"/></svg>
<div class="btn" style="left:1443.5px;top:227.5px;width:70px;height:30.5px"></div>
<div class="t" style="left:1456px;top:236px;font-size:14.3px;color:#28272d">History</div>

<svg class="ic" style="left:453.5px;top:295px" width="14" height="14" viewBox="0 0 14 14"><circle class="s" cx="4.3" cy="2.8" r="1.8" style="stroke-width:1.3"/><path class="s" d="M1.5 13V8.5a2.8 2.8 0 0 1 5.6 0V13zM7.5 13v-3a2.5 2.5 0 0 1 5 0v3z" style="stroke-width:1.3"/><circle class="s" cx="10" cy="5.5" r="1.6" style="stroke-width:1.3"/></svg>
<div class="t" style="left:472.5px;top:295px;font-size:13.65px;font-weight:bold;color:#1f1e24">Code owners</div>
<div class="abs" style="position:absolute;left:567px;top:292.5px;width:31.5px;height:19px;border-radius:9.5px;background:#dcdcde"></div>
<div class="t" style="left:573px;top:296.5px;font-size:11.7px;color:#535158">278</div>
<svg class="ic" style="left:612px;top:297px" width="6" height="9" viewBox="0 0 6 9"><path class="s" d="M1.2 1 4.7 4.5 1.2 8" style="stroke:#1f75cb;stroke-width:1.5"/></svg>
<div class="t" style="left:626px;top:295px;font-size:14.2px;color:#1b6dc1">Show all</div>
<svg class="ic" style="left:1339.5px;top:294px" width="16" height="16" viewBox="0 0 16 16"><circle class="s" cx="8" cy="8" r="7" style="stroke:#1f75cb;stroke-width:1.3"/><path class="s" d="M6 6.2a2 2 0 1 1 2.8 1.8c-.6.3-.8.7-.8 1.3v.3" style="stroke:#1f75cb;stroke-width:1.3"/><circle cx="8" cy="11.6" r=".8" fill="#1f75cb"/></svg>
<div class="btn" style="left:1361.5px;top:290.5px;width:152px;height:23px;border-radius:7px"></div>
<div class="t" style="left:1370px;top:295px;font-size:14.3px;color:#28272d">Manage branch rules</div>

<!-- FILE HEADER -->
<div class="abs" style="position:absolute;left:436.5px;top:345.5px;width:1093.5px;height:60px;border:1px solid #dcdcde;border-radius:7px 7px 0 0;background:#fbfafb"></div>
<svg class="ic" style="left:453.8px;top:364px" width="13.3" height="11.5" viewBox="0 0 261.76 226.69"><path d="M161.096.001l-30.225 52.351L100.647.001H-.005l130.877 226.688L261.749.001z" fill="#41b883"/><path d="M161.096.001l-30.225 52.351L100.647.001H52.346l78.526 136.01L209.398.001z" fill="#34495e"/></svg>
<div class="t" style="left:476.3px;top:364px;font-size:13.75px;font-weight:bold;color:#1f1e24">file_tree_browser.vue</div>
<div class="t" style="left:625.8px;top:365.5px;font-size:11.4px;color:#737278">4.15 KiB</div>
<div class="btn" style="left:1419.5px;top:354.5px;width:94px;height:30px;border-radius:8px"></div>
<div class="abs" style="position:absolute;left:1450.5px;top:355px;width:1px;height:29px;background:#cfcdd2"></div>
<div class="abs" style="position:absolute;left:1482px;top:355px;width:1px;height:29px;background:#cfcdd2"></div>
<svg class="ic" style="left:1428.5px;top:362.5px" width="14" height="14" viewBox="0 0 14 14"><path class="s" d="M4 1.5H1.5V9H4M4.5 4.5h8v8h-8z" style="stroke-width:1.4"/></svg>
<svg class="ic" style="left:1460px;top:361.5px" width="13" height="15" viewBox="0 0 13 15"><path class="s" d="M1.5 1h6l4 4v9h-10zM7.5 1v4h4M3.5 7l2 1.5-2 1.5M6 11h2.5" style="stroke-width:1.3"/></svg>
<svg class="ic" style="left:1491px;top:362.5px" width="14" height="14" viewBox="0 0 14 14"><path class="s" d="M7 1v8M4 6l3 3 3-3M1.5 9v3.5h11V9" style="stroke-width:1.5"/></svg>

<!-- SCROLLBAR -->
<div class="abs" style="position:absolute;left:1549px;top:105px;width:5px;height:381px;border-radius:3px;background:#8b8a90"></div>
<div class="code">
<div class="ln">1
2
3
4
5
6
7
8
9
10
11
12
13
14
15
16
17
18
19
20
21
22
23
24
25
26
27
28
29
30
31
32
33
34
35
36
37
38
39
40
41
42
43</div>
<div class="gut"></div>
<div class="cd"><span class="o">&lt;</span><span class="k">script</span><span class="o">&gt;</span>
<span class="k">import</span> <span class="p">{</span> <span class="v">mapState</span><span class="p">,</span> <span class="v">mapActions</span> <span class="p">}</span> <span class="k">from</span> <span class="p">'</span><span class="st">pinia</span><span class="p">'</span><span class="p">;</span>
<span class="k">import</span> <span class="p">{</span> <span class="v">GlButton</span> <span class="p">}</span> <span class="k">from</span> <span class="p">'</span><span class="st">@gitlab/ui</span><span class="p">'</span><span class="p">;</span>
<span class="k">import</span> <span class="p">{</span> <span class="v">InternalEvents</span> <span class="p">}</span> <span class="k">from</span> <span class="p">'</span><span class="st">~/tracking</span><span class="p">'</span><span class="p">;</span>
<span class="k">import</span> <span class="v">PanelResizer</span> <span class="k">from</span> <span class="p">'</span><span class="st">~/vue_shared/components/panel_resizer.vue</span><span class="p">'</span><span class="p">;</span>
<span class="k">import</span> <span class="v">FileBrowserHeight</span> <span class="k">from</span> <span class="p">'</span><span class="st">~/diffs/components/file_browser_height.vue</span><span class="p">'</span><span class="p">;</span>
<span class="k">import</span> <span class="p">{</span> <span class="v">useFileTreeBrowserVisibility</span> <span class="p">}</span> <span class="k">from</span> <span class="p">'</span><span class="st">~/repository/stores/file_tree_browser_visibility</span><span class="p">'</span><span class="p">;</span>
<span class="k">import</span> <span class="p">{</span> <span class="v">useMainContainer</span> <span class="p">}</span> <span class="k">from</span> <span class="p">'</span><span class="st">~/pinia/global_stores/main_container</span><span class="p">'</span><span class="p">;</span>
<span class="k">import</span> <span class="v">TreeList</span> <span class="k">from</span> <span class="p">'</span><span class="st">./components/tree_list.vue</span><span class="p">'</span><span class="p">;</span>

<span class="k">export</span> <span class="k">const</span> <span class="v">TREE_WIDTH</span> <span class="o">=</span> <span class="n">320</span><span class="p">;</span>
<span class="k">export</span> <span class="k">const</span> <span class="v">MIN_TREE_WIDTH</span> <span class="o">=</span> <span class="n">240</span><span class="p">;</span>
<span class="k">export</span> <span class="k">const</span> <span class="v">FILE_TREE_BROWSER_STORAGE_KEY</span> <span class="o">=</span> <span class="p">'</span><span class="st">file_tree_browser_storage_key</span><span class="p">'</span><span class="p">;</span>

<span class="k">export</span> <span class="k">default</span> <span class="p">{</span>
  <span class="v">name</span><span class="p">:</span> <span class="p">'</span><span class="st">FileTreeBrowser</span><span class="p">'</span><span class="p">,</span>
  <span class="v">components</span><span class="p">:</span> <span class="p">{</span>
    <span class="v">TreeList</span><span class="p">,</span>
    <span class="v">FileBrowserHeight</span><span class="p">,</span>
    <span class="v">PanelResizer</span><span class="p">,</span>
    <span class="v">GlButton</span><span class="p">,</span>
  <span class="p">}</span><span class="p">,</span>
  <span class="v">mixins</span><span class="p">:</span> <span class="p">[</span><span class="v">InternalEvents</span><span class="p">.</span><span class="v">mixin</span><span class="p">(</span><span class="p">)</span><span class="p">]</span><span class="p">,</span>
  <span class="v">props</span><span class="p">:</span> <span class="p">{</span>
    <span class="v">projectPath</span><span class="p">:</span> <span class="p">{</span>
      <span class="v">type</span><span class="p">:</span> <span class="p">String</span><span class="p">,</span>
      <span class="v">required</span><span class="p">:</span> <span class="k">true</span><span class="p">,</span>
    <span class="p">}</span><span class="p">,</span>
    <span class="v">currentRef</span><span class="p">:</span> <span class="p">{</span>
      <span class="v">type</span><span class="p">:</span> <span class="p">String</span><span class="p">,</span>
      <span class="v">required</span><span class="p">:</span> <span class="k">true</span><span class="p">,</span>
    <span class="p">}</span><span class="p">,</span>
    <span class="v">refType</span><span class="p">:</span> <span class="p">{</span>
      <span class="v">type</span><span class="p">:</span> <span class="p">String</span><span class="p">,</span>
      <span class="v">required</span><span class="p">:</span> <span class="k">false</span><span class="p">,</span>
      <span class="k">default</span><span class="p">:</span> <span class="p">''</span><span class="p">,</span>
    <span class="p">}</span><span class="p">,</span>
  <span class="p">}</span><span class="p">,</span>
  <span class="v">data</span><span class="p">(</span><span class="p">)</span> <span class="p">{</span>
    <span class="k">return</span> <span class="p">{</span>
      <span class="v">treeWidth</span><span class="p">:</span> <span class="v">TREE_WIDTH</span><span class="p">,</span>
      <span class="v">isAnimating</span><span class="p">:</span> <span class="k">false</span><span class="p">,</span>
    <span class="p">}</span><span class="p">;</span></div>
</div></body></html>
